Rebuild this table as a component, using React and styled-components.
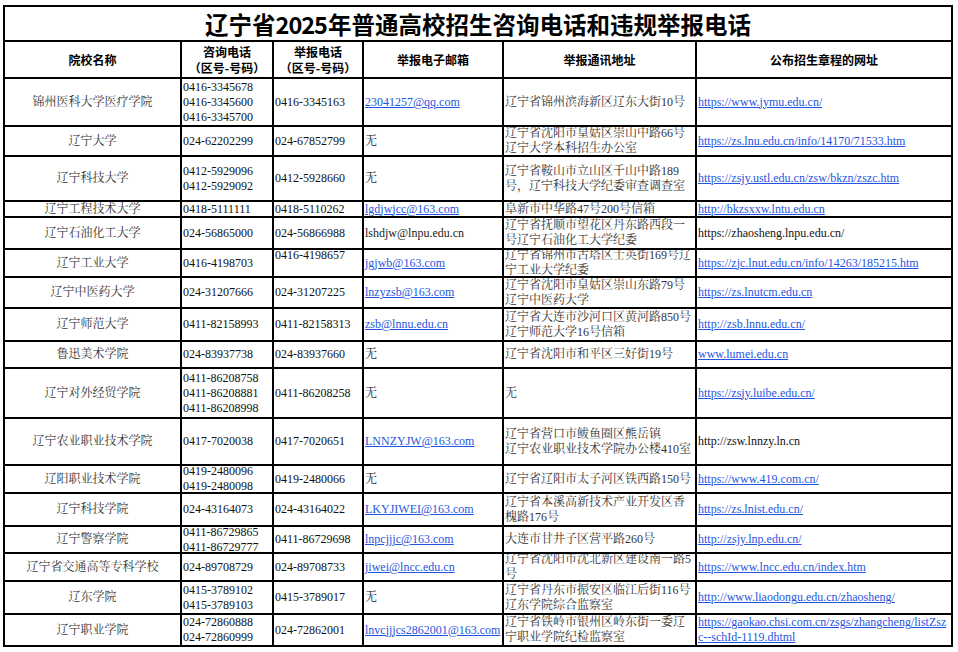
import React from 'react';
import styled, { createGlobalStyle } from 'styled-components';

const Global = createGlobalStyle`
  html, body { margin: 0; padding: 0; background: #fff; }
  body { font-family: "Liberation Serif", "Noto Serif CJK SC", "Noto Sans CJK SC", serif; }
`;

const ROW_HEIGHTS = [33, 35, 46, 28, 43, 14, 30, 26, 29, 31, 25, 48, 45, 26, 31, 25, 26, 31, 30];

const Page = styled.div`
  width: 958px;
  height: 652px;
  box-sizing: border-box;
  padding: 5px 0 0 3px;
  overflow: hidden;
`;

const Sheet = styled.div`
  display: grid;
  grid-template-columns: 175px 90px 88px 138px 191px 254px;
  grid-template-rows: ${ROW_HEIGHTS.map((h) => `${h}px`).join(' ')};
  gap: 2px;
  padding: 2px;
  background: #000;
  width: max-content;
`;

const Cell = styled.div`
  background: #fff;
  overflow: hidden;
  display: flex;
  flex-direction: column;
  justify-content: center;
  align-items: ${(p) => (p.$center ? 'center' : 'flex-start')};
  padding: 0 1px;
  font-size: 12px;
  line-height: 15px;
  white-space: nowrap;
  color: ${(p) => p.$tone || '#111'};
`;

const Title = styled.div`
  grid-column: 1 / -1;
  background: #fff;
  display: flex;
  align-items: center;
  justify-content: center;
  font-family: "Noto Sans CJK SC", sans-serif;
  font-weight: 700;
  font-size: 23.5px;
  line-height: 30px;
  color: #000;
  padding-top: 1px;
  white-space: nowrap;
`;

const Year = styled.span`
  letter-spacing: -1px;
  margin-right: 1px;
`;

const Head = styled.div`
  background: #fff;
  display: flex;
  flex-direction: column;
  align-items: center;
  justify-content: center;
  font-family: "Noto Sans CJK SC", sans-serif;
  font-weight: 700;
  font-size: 12px;
  line-height: 16px;
  color: #000;
`;

const Line = styled.span`
  display: block;
  min-height: 15px;
`;

const Link = styled.a`
  color: #1f55e0;
  text-decoration: underline;
  text-decoration-thickness: 1px;
  text-underline-offset: 1px;
`;

const rows = [
  {
    name: '锦州医科大学医疗学院',
    consult: ['0416-3345678', '0416-3345600', '0416-3345700'],
    report: ['0416-3345163'],
    email: { text: '23041257@qq.com', link: true },
    addr: ['辽宁省锦州滨海新区辽东大街10号'],
    url: { lines: ['https://www.jymu.edu.cn/'], link: true },
  },
  {
    name: '辽宁大学',
    consult: ['024-62202299'],
    report: ['024-67852799'],
    email: { text: '无' },
    addr: ['辽宁省沈阳市皇姑区崇山中路66号', '辽宁大学本科招生办公室'],
    url: { lines: ['https://zs.lnu.edu.cn/info/14170/71533.htm'], link: true },
  },
  {
    name: '辽宁科技大学',
    consult: ['0412-5929096', '0412-5929092'],
    report: ['0412-5928660'],
    email: { text: '无' },
    addr: ['辽宁省鞍山市立山区千山中路189', '号，辽宁科技大学纪委审查调查室'],
    url: { lines: ['https://zsjy.ustl.edu.cn/zsw/bkzn/zszc.htm'], link: true },
  },
  {
    name: '辽宁工程技术大学',
    consult: ['0418-5111111'],
    report: ['0418-5110262'],
    email: { text: 'lgdjwjcc@163.com', link: true },
    addr: ['阜新市中华路47号200号信箱'],
    url: { lines: ['http://bkzsxxw.lntu.edu.cn'], link: true },
  },
  {
    name: '辽宁石油化工大学',
    consult: ['024-56865000'],
    report: ['024-56866988'],
    email: { text: 'lshdjw@lnpu.edu.cn' },
    addr: ['辽宁省抚顺市望花区丹东路西段一', '号辽宁石油化工大学纪委'],
    url: { lines: ['https://zhaosheng.lnpu.edu.cn/'] },
  },
  {
    name: '辽宁工业大学',
    consult: ['0416-4198703'],
    report: ['0416-4198657', ''],
    email: { text: 'jgjwb@163.com', link: true },
    addr: ['辽宁省锦州市古塔区士英街169号辽', '宁工业大学纪委'],
    url: { lines: ['https://zjc.lnut.edu.cn/info/14263/185215.htm'], link: true },
  },
  {
    name: '辽宁中医药大学',
    consult: ['024-31207666'],
    report: ['024-31207225'],
    email: { text: 'lnzyzsb@163.com', link: true },
    addr: ['辽宁省沈阳市皇姑区崇山东路79号', '辽宁中医药大学'],
    url: { lines: ['https://zs.lnutcm.edu.cn'], link: true },
  },
  {
    name: '辽宁师范大学',
    consult: ['0411-82158993'],
    report: ['0411-82158313'],
    email: { text: 'zsb@lnnu.edu.cn', link: true },
    addr: ['辽宁省大连市沙河口区黄河路850号', '辽宁师范大学16号信箱'],
    url: { lines: ['http://zsb.lnnu.edu.cn/'], link: true },
  },
  {
    name: '鲁迅美术学院',
    consult: ['024-83937738'],
    report: ['024-83937660'],
    email: { text: '无' },
    addr: ['辽宁省沈阳市和平区三好街19号'],
    url: { lines: ['www.lumei.edu.cn'], link: true },
  },
  {
    name: '辽宁对外经贸学院',
    consult: ['0411-86208758', '0411-86208881', '0411-86208998'],
    report: ['0411-86208258'],
    email: { text: '无' },
    addr: ['无'],
    url: { lines: ['https://zsjy.luibe.edu.cn/'], link: true },
  },
  {
    name: '辽宁农业职业技术学院',
    consult: ['0417-7020038'],
    report: ['0417-7020651'],
    email: { text: 'LNNZYJW@163.com', link: true },
    addr: ['辽宁省营口市鲅鱼圈区熊岳镇', '辽宁农业职业技术学院办公楼410室'],
    url: { lines: ['http://zsw.lnnzy.ln.cn'] },
  },
  {
    name: '辽阳职业技术学院',
    consult: ['0419-2480096', '0419-2480098'],
    report: ['0419-2480066'],
    email: { text: '无' },
    addr: ['辽宁省辽阳市太子河区铁西路150号'],
    url: { lines: ['https://www.419.com.cn/'], link: true },
  },
  {
    name: '辽宁科技学院',
    consult: ['024-43164073'],
    report: ['024-43164022'],
    email: { text: 'LKYJIWEI@163.com', link: true },
    addr: ['辽宁省本溪高新技术产业开发区香', '槐路176号'],
    url: { lines: ['https://zs.lnist.edu.cn/'], link: true },
  },
  {
    name: '辽宁警察学院',
    consult: ['0411-86729865', '0411-86729777'],
    report: ['0411-86729698'],
    email: { text: 'lnpcjjjc@163.com', link: true },
    addr: ['大连市甘井子区营平路260号'],
    url: { lines: ['http://zsjy.lnp.edu.cn/'], link: true },
  },
  {
    name: '辽宁省交通高等专科学校',
    consult: ['024-89708729'],
    report: ['024-89708733'],
    email: { text: 'jiwei@lncc.edu.cn', link: true },
    addr: ['辽宁省沈阳市沈北新区建设南一路5', '号'],
    url: { lines: ['https://www.lncc.edu.cn/index.htm'], link: true },
  },
  {
    name: '辽东学院',
    consult: ['0415-3789102', '0415-3789103'],
    report: ['0415-3789017'],
    email: { text: '无' },
    addr: ['辽宁省丹东市振安区临江后街116号', '辽东学院综合监察室'],
    url: { lines: ['http://www.liaodongu.edu.cn/zhaosheng/'], link: true },
  },
  {
    name: '辽宁职业学院',
    consult: ['024-72860888', '024-72860999'],
    report: ['024-72862001'],
    email: { text: 'lnvcjjjcs2862001@163.com', link: true },
    addr: ['辽宁省铁岭市银州区岭东街一委辽', '宁职业学院纪检监察室'],
    url: {
      lines: ['https://gaokao.chsi.com.cn/zsgs/zhangcheng/listZsz', 'c--schId-1119.dhtml'],
      link: true,
    },
  },
];

const Lines = ({ lines }) => lines.map((l, i) => <Line key={i}>{l}</Line>);

export default function App() {
  return (
    <Page>
      <Global />
      <Sheet>
        <Title>
          辽宁省<Year>2025</Year>年普通高校招生咨询电话和违规举报电话
        </Title>
        <Head>院校名称</Head>
        <Head>
          <span>咨询电话</span>
          <span>（区号-号码）</span>
        </Head>
        <Head>
          <span>举报电话</span>
          <span>（区号-号码）</span>
        </Head>
        <Head>举报电子邮箱</Head>
        <Head>举报通讯地址</Head>
        <Head>公布招生章程的网址</Head>
        {rows.map((r) => (
          <React.Fragment key={r.name}>
            <Cell $center $tone="#333">{r.name}</Cell>
            <Cell>
              <Lines lines={r.consult} />
            </Cell>
            <Cell>
              <Lines lines={r.report} />
            </Cell>
            <Cell $tone={r.email.link ? undefined : '#222'}>
              {r.email.link ? <Link href="#">{r.email.text}</Link> : r.email.text}
            </Cell>
            <Cell $tone="#333">
              <Lines lines={r.addr} />
            </Cell>
            <Cell>
              {r.url.link ? (
                <Link href="#">
                  <Lines lines={r.url.lines} />
                </Link>
              ) : (
                <Lines lines={r.url.lines} />
              )}
            </Cell>
          </React.Fragment>
        ))}
      </Sheet>
    </Page>
  );
}
